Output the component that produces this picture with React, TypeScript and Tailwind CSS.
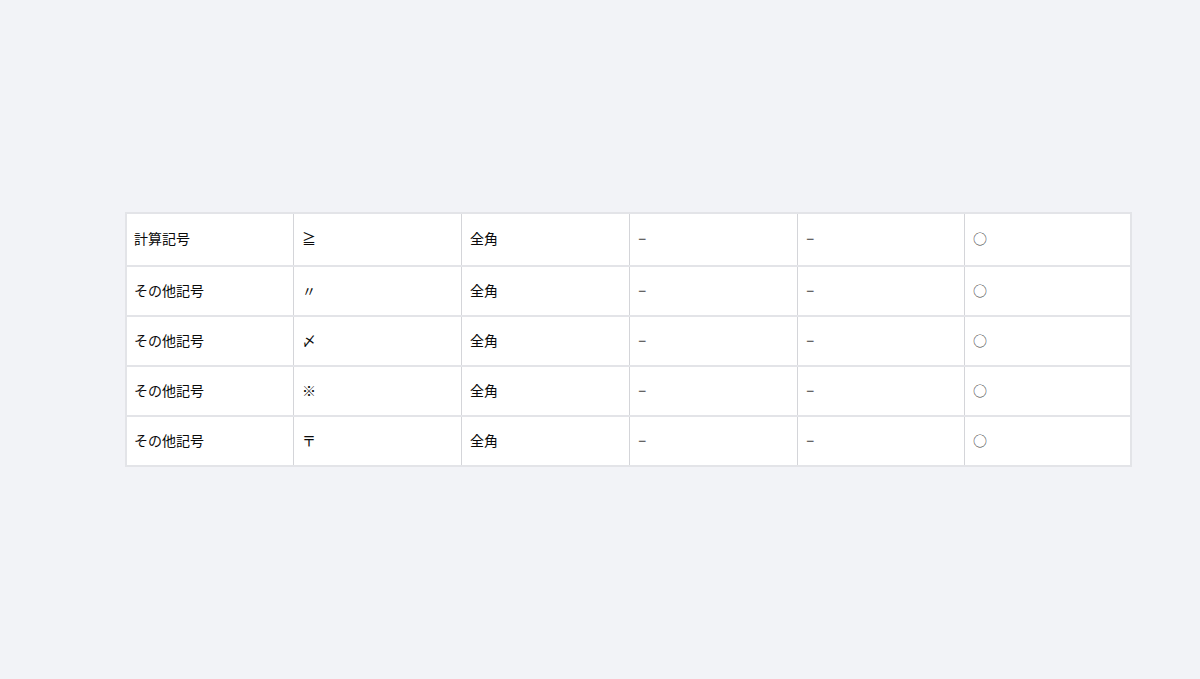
import React from "react";

const rows = [
  ["計算記号", "≧"],
  ["その他記号", "〃"],
  ["その他記号", "〆"],
  ["その他記号", "※"],
  ["その他記号", "〒"],
];

const heights = ["h-[53px]", "h-[50px]", "h-[50px]", "h-[50px]", "h-[48px]"];

export default function App() {
  return (
    <div
      className="min-h-[679px] w-full bg-[#f2f3f7] flex items-center pl-[125px]"
      style={{ fontFamily: '"Noto Sans CJK JP", "Noto Sans", sans-serif' }}
    >
      <div className="w-[1007px] border-2 border-[#e3e4e8] bg-white text-[14px] text-[#0a0a0a]">
        {rows.map((r, i) => (
          <div
            key={i}
            className={`grid grid-cols-[167px_168px_168px_168px_167px_1fr] ${
              i < rows.length - 1 ? "border-b-2 border-[#e3e4e8]" : ""
            } ${heights[i]}`}
          >
            <div className="flex items-center pl-[7px] pr-2 pb-[2px] border-r border-[#d4d5d9]">{r[0]}</div>
            <div className="flex items-center pl-[8px] pr-2 pb-[2px] border-r border-[#d4d5d9]">{r[1]}</div>
            <div className="flex items-center px-[8px] pb-[2px] border-r border-[#d4d5d9]">全角</div>
            <div
              className="flex items-center pl-[8px] pr-2 pb-[2px] border-r border-[#d4d5d9] text-[#555] font-medium"
              style={{ fontFamily: '"Noto Sans", sans-serif' }}
            >
              −
            </div>
            <div
              className="flex items-center pl-[8px] pr-2 pb-[2px] border-r border-[#d4d5d9] text-[#555] font-medium"
              style={{ fontFamily: '"Noto Sans", sans-serif' }}
            >
              −
            </div>
            <div className="flex items-center px-[8px] pb-[2px] text-[#444]">○</div>
          </div>
        ))}
      </div>
    </div>
  );
}
